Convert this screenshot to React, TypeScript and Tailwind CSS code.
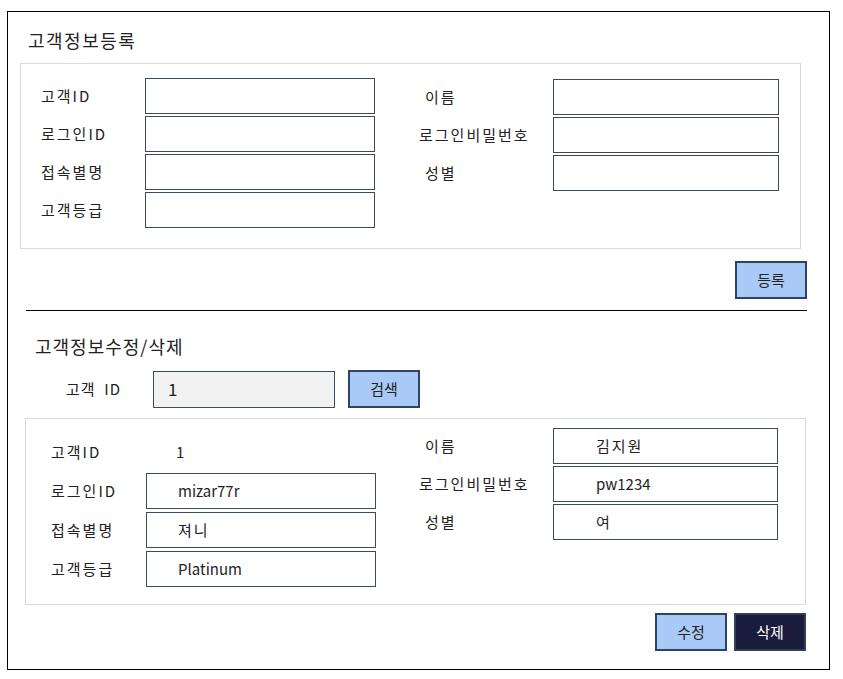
import React from "react";

const font = { fontFamily: '"Noto Sans CJK KR", "Noto Sans", sans-serif' };

const Box = ({ value = "", className = "" }: { value?: string; className?: string }) => (
  <div className={`h-[36px] border border-[#3d4a5c] bg-white flex items-center text-[15px] text-[#222] ${className}`}>
    {value}
  </div>
);

const Btn = ({ label, dark = false }: { label: string; dark?: boolean }) => (
  <button
    className={`w-[72px] h-[38px] border-2 flex items-center justify-center text-[15px] ${
      dark ? "bg-[#1b1c3d] border-[#34405a] text-white" : "bg-[#a9c9f6] border-[#2f4366] text-[#222]"
    }`}
  >
    {label}
  </button>
);

const Row = ({ label, w, children, lpad = "" }: { label: string; w: string; children: React.ReactNode; lpad?: string }) => (
  <div className="flex items-center">
    <div className={`${w} ${lpad} text-[15px] tracking-[2px] text-[#222]`}>{label}</div>
    {children}
  </div>
);

export default function App() {
  return (
    <div style={font} className="bg-white w-[843px] h-[679px] pt-[11px] pl-[7px]">
      <div className="w-[823px] h-[659px] border border-black flex flex-col">
        <div className="ml-[20px] mt-[16px] text-[18px] leading-[24px] tracking-[1.5px] text-[#222]">고객정보등록</div>

        {/* 등록 패널 */}
        <div className="ml-[12px] mt-[11px] w-[781px] h-[186px] border border-[#d9d9d9] flex pl-[20px] pt-[14px]">
          <div className="flex flex-col gap-[2px]">
            <Row label="고객ID" w="w-[104px]"><Box className="w-[230px]" /></Row>
            <Row label="로그인ID" w="w-[104px]"><Box className="w-[230px]" /></Row>
            <Row label="접속별명" w="w-[104px]"><Box className="w-[230px]" /></Row>
            <Row label="고객등급" w="w-[104px]"><Box className="w-[230px]" /></Row>
          </div>
          <div className="ml-[44px] mt-[1px] flex flex-col gap-[2px]">
            <Row label="이름" w="w-[134px]" lpad="pl-[6px]"><Box className="w-[226px]" /></Row>
            <Row label="로그인비밀번호" w="w-[134px]"><Box className="w-[226px]" /></Row>
            <Row label="성별" w="w-[134px]" lpad="pl-[6px]"><Box className="w-[226px]" /></Row>
          </div>
        </div>

        <div className="mt-[12px] mr-[22px] flex justify-end">
          <Btn label="등록" />
        </div>

        <div className="ml-[18px] mt-[11px] w-[781px] border-t border-black" />

        <div className="ml-[27px] mt-[23px] text-[18px] leading-[24px] tracking-[1px] text-[#222]">고객정보수정/삭제</div>

        {/* 검색 */}
        <div className="mt-[12px] flex items-center">
          <div className="ml-[58px] w-[87px] text-[15px] tracking-[1px] text-[#222]">고객&nbsp; ID</div>
          <div className="w-[182px] h-[37px] border border-[#3d4a5c] bg-[#f2f2f2] flex items-center pl-[14px] text-[17px] text-[#222]">1</div>
          <div className="ml-[13px]">
            <Btn label="검색" />
          </div>
        </div>

        {/* 수정 패널 */}
        <div className="ml-[17px] mt-[10px] w-[781px] h-[187px] border border-[#d9d9d9] flex pl-[25px]">
          <div className="pt-[15px] flex flex-col gap-[3px]">
            <Row label="고객ID" w="w-[95px]">
              <div className="h-[36px] w-[230px] flex items-center pl-[30px] text-[15px] text-[#222]">1</div>
            </Row>
            <Row label="로그인ID" w="w-[95px]"><Box value="mizar77r" className="w-[230px] pl-[31px]" /></Row>
            <Row label="접속별명" w="w-[95px]"><Box value="져니" className="w-[230px] pl-[31px] tracking-[2px]" /></Row>
            <Row label="고객등급" w="w-[95px]"><Box value="Platinum" className="w-[230px] pl-[31px]" /></Row>
          </div>
          <div className="ml-[43px] pt-[9px] flex flex-col gap-[2px]">
            <Row label="이름" w="w-[134px]" lpad="pl-[6px]"><Box value="김지원" className="w-[225px] pl-[42px] tracking-[2px]" /></Row>
            <Row label="로그인비밀번호" w="w-[134px]"><Box value="pw1234" className="w-[225px] pl-[42px]" /></Row>
            <Row label="성별" w="w-[134px]" lpad="pl-[6px]"><Box value="여" className="w-[225px] pl-[42px]" /></Row>
          </div>
        </div>

        <div className="mt-[8px] mr-[23px] flex justify-end gap-[7px]">
          <Btn label="수정" />
          <Btn label="삭제" dark />
        </div>
      </div>
    </div>
  );
}
